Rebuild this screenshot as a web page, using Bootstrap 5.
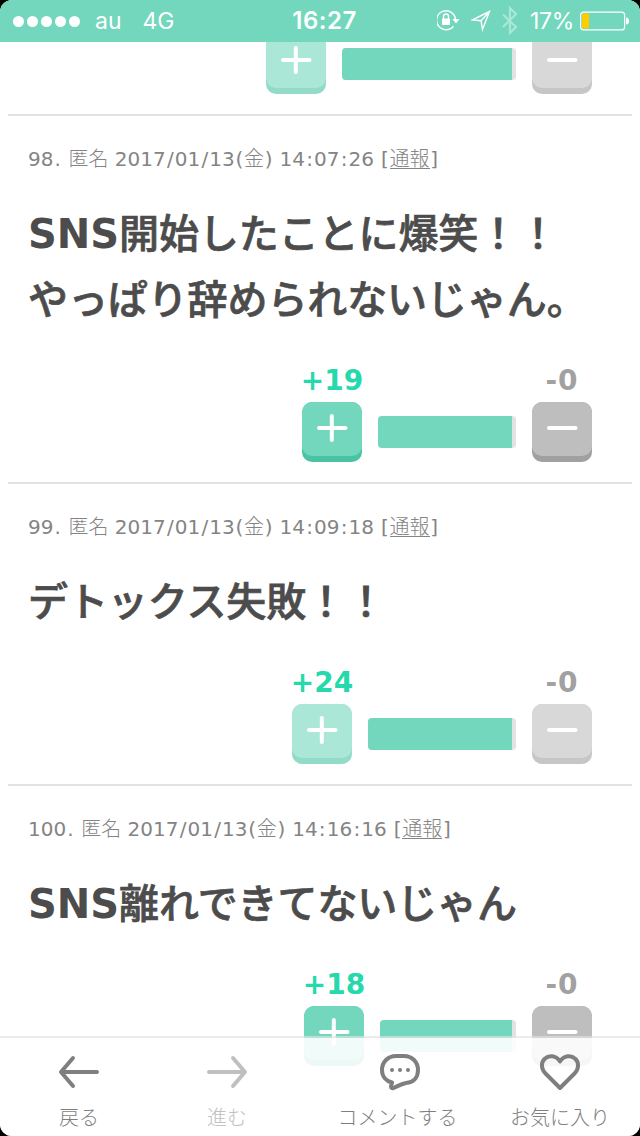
<!DOCTYPE html>
<html lang="ja">
<head>
<meta charset="utf-8">
<meta name="viewport" content="width=device-width, initial-scale=1">
<title>コメント</title>
<link href="https://cdn.jsdelivr.net/npm/bootstrap@5.3.0/dist/css/bootstrap.min.css" rel="stylesheet">
<style>
html{background:#000}
body{background:#000;font-family:"DejaVu Sans","Noto Sans CJK JP",sans-serif;color:#4c4c4c}
.screen{width:640px;height:1136px;border-radius:12px;background:#fff}
.statusbar{height:42px;background:#72d7bd;font-family:Inter,sans-serif;font-size:23px;line-height:42px;padding:0 11px 0 13px;display:grid;grid-template-columns:1fr auto 1fr}
.dots{gap:3px}
.dots i{width:11px;height:11px;border-radius:50%;background:#fff}
.clock{font-weight:600;font-size:24px;letter-spacing:.5px;padding-left:7px}
.feed{margin:0 8px}
.post{padding:28px 40px 20px 20px;border-bottom:2px solid #e2e2e2}
.post:last-child{border-bottom:0}
.post-cut{padding-top:0;margin-top:-8px}
.meta{font-size:20px;line-height:30px;height:30px;color:#848484;white-space:nowrap;margin-bottom:27px}
.meta a{color:inherit;text-decoration:none;box-shadow:0 1px #848484;display:inline-block}
.jp{font-family:"Noto Sans CJK JP",sans-serif;font-weight:300;line-height:21px}
.wide{padding:0 1.17px}
.brk{padding:0 .7px}
.msg{font-size:40px;line-height:66px;font-weight:700;margin:0 -20px 27px 0;white-space:nowrap}
.msg>div{height:66px}
.msg .ja{font-family:"Noto Sans CJK JP",sans-serif;font-weight:500;line-height:40px;letter-spacing:-.1px;-webkit-text-stroke:.7px #4c4c4c}
.vote{gap:16px}
.count{font-size:28px;font-weight:700;line-height:42px;width:60px;display:flex;justify-content:center;white-space:nowrap}
.up{color:#25d9ac}.down{color:#a1a1a1;letter-spacing:1px}
.key{width:60px;height:60px;border:0;border-radius:10px;padding:0;display:flex;align-items:flex-start;overflow:hidden}
.plus{background:#4ac3a4}.minus{background:#a0a0a0}
.key svg{height:54px;border-radius:10px;background:#72d7bd}
.minus svg{background:#bebebe}
.off .plus{background:#91dbc8}.off .plus svg{background:#aae7d7}
.off .minus{background:#c6c6c6}.off .minus svg{background:#d8d8d8}
.meter{height:32px;margin-bottom:14px;border-radius:4px;background:#e2e2e2;padding-right:4px}
.meter .progress-bar{background:#72d7bd;width:100%}
.toolbar{height:100px;border-top:2px solid rgba(226,226,226,.65);background:rgba(255,255,255,.9);background-clip:padding-box;display:grid;grid-template-columns:158px 138px 203px 122px;font-family:"Noto Sans CJK JP",sans-serif;font-size:20px;font-weight:300;color:#7f7f7f}
.toolbar a{color:inherit;text-decoration:none;padding-top:14px}
.toolbar .dim{color:#c0c0c0}
.toolbar svg{width:44px;height:40px;fill:none;stroke:currentColor;stroke-width:4;stroke-linecap:round;stroke-linejoin:round}
.toolbar span{line-height:30px;margin-top:10px;white-space:nowrap}
</style>
</head>
<body>
<div class="screen position-relative overflow-hidden">
  <header class="statusbar text-white position-relative z-1">
    <div class="d-flex align-items-center">
      <div class="dots d-flex"><i></i><i></i><i></i><i></i><i></i></div>
      <span style="margin-left:15px">au</span><span style="margin-left:21px">4G</span>
    </div>
    <div class="clock">16:27</div>
    <div class="d-flex align-items-center justify-content-end">
      <svg width="24" height="24" viewBox="2 1 24 24" fill="none" stroke="#fff" stroke-width="1.4"><path d="M18.500 18.200A9.500 9.500 0 1 1 20.500 11"/><path d="M17.500 11h7l-3.500 4.500z" fill="#fff" stroke="none"/><rect x="7" y="10.500" width="8" height="6.500" rx=".8" fill="#fff" stroke="none"/><path d="M8.500 11V8.500a2.500 2.500 0 0 1 5 0V11"/></svg>
      <svg style="margin-left:10px" width="22" height="26" viewBox="5 1 22 26" fill="none" stroke="#fff" stroke-width="1.4"><path d="M23.500 4.500 6 13l9 .7 1.500 8.800zM15 13.700l8.500-9.200"/></svg>
      <svg style="margin-left:7px" width="22" height="30" viewBox="1 0 22 30" fill="none" stroke="#aae7d7" stroke-width="2.2"><path d="m4 8.500 13 12.500-6 5.800V2.200L17 8 4 21"/></svg>
      <span style="margin-left:8px;letter-spacing:-.3px">17%</span>
      <svg style="margin-left:6px" width="49" height="20" viewBox="0 0 49 20"><rect x=".6" y="1.100" width="44" height="17.800" rx="3" fill="none" stroke="#fff" stroke-width="1.200"/><rect x="2" y="2.500" width="7" height="15" rx="1" fill="#fc0"/><path d="M46 6.500q3 0 3 3.500t-3 3.500z" fill="#fff"/></svg>
    </div>
  </header>

  <main class="feed" id="feed"></main>

  <nav class="toolbar position-absolute bottom-0 start-0 w-100">
    <a class="d-flex flex-column align-items-center" href="#"><svg viewBox="0 0 44 40"><path d="M40 20H4M16 6 4 20l12 14"/></svg><span>戻る</span></a>
    <a class="d-flex flex-column align-items-center dim" href="#"><svg viewBox="0 0 44 40"><path d="M4 20h36M28 6l12 14-12 14"/></svg><span>進む</span></a>
    <a class="d-flex flex-column align-items-center" href="#"><svg class="ms-1" viewBox="0 0 44 40"><path d="M18 4h8C34 4 40 10 40 18 40 26 35 30.500 28 31 23 32 20 34 15.500 36 14 36.500 13 36 13 34.500L14 30.500C8 29 4 24.500 4 18 4 10 10 4 18 4Z"/><g fill="currentColor" stroke="none"><circle cx="14" cy="18" r="2"/><circle cx="22" cy="18" r="2"/><circle cx="30" cy="18" r="2"/></g></svg><span>コメントする</span></a>
    <a class="d-flex flex-column align-items-center" href="#"><svg viewBox="0 0 44 40"><path d="M22 36 7 21C3 16.500 3 10.500 6.500 7 11 2.800 18 3.300 22 9.500 26 3.300 33 2.800 37.500 7 41 10.500 41 16.500 37 21Z"/></svg><span>お気に入り</span></a>
  </nav>
</div>
<script src="https://cdn.jsdelivr.net/npm/bootstrap@5.3.0/dist/js/bootstrap.bundle.min.js"></script>
<script>
const posts = [
  {meter: 174, off: true},
  {no: 98, time: '14:07:26', lines: ['SNS開始したことに爆笑！！', 'やっぱり辞められないじゃん。'], up: 19, meter: 138},
  {no: 99, time: '14:09:18', lines: ['デトックス失敗！！'], up: 24, meter: 148, off: true},
  {no: 100, time: '14:16:16', lines: ['SNS離れできてないじゃん'], up: 18, meter: 136}
];
const spread = s => s.replace(/[\/:.]/g, '<span class="wide">$&</span>').replace(/[()\[\]]/g, '<span class="brk">$&</span>');
const ja = s => '<div>' + s.replace(/[^A-Z]+/g, '<span class="ja">$&</span>') + '</div>';
const key = (kind, d) => `<button type="button" class="key ${kind}"><svg width="60" height="54" viewBox="0 0 60 54" fill="none" stroke="#fff" stroke-width="4" stroke-linecap="round"><path d="${d}"/></svg></button>`;
document.getElementById('feed').innerHTML = posts.map(p => `
  <article class="post ${p.no ? '' : 'post-cut'}">
    ${p.no ? `<div class="meta">${spread(p.no + '.')} <span class="jp">匿名</span> ${spread('2017/01/13(')}<span class="jp">金</span>${spread(') ' + p.time + ' [')}<a class="jp" href="#">通報</a>${spread(']')}</div>
    <div class="msg">${p.lines.map(ja).join('')}</div>` : ''}
    <div class="vote d-flex justify-content-end align-items-end ${p.off ? 'off' : ''}">
      <div>${p.no ? `<div class="count up">+${p.up}</div>` : ''}${key('plus', 'M17 26H43.500M29.800 14V38')}</div>
      <div class="meter d-flex overflow-hidden" style="width:${p.meter}px"><div class="progress-bar"></div></div>
      <div>${p.no ? '<div class="count down">-0</div>' : ''}${key('minus', 'M17 26H43.500')}</div>
    </div>
  </article>`).join('');
</script>
</body>
</html>
